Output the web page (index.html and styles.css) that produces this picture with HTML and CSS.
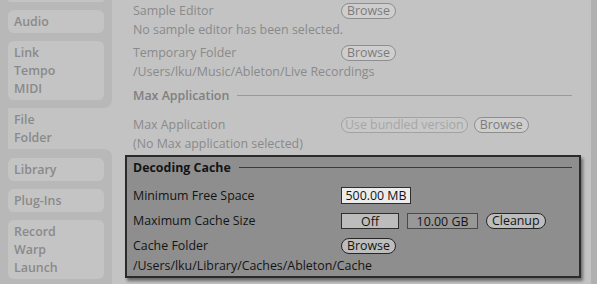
FILE: index.html
```html
<!DOCTYPE html>
<html lang="en">
<head>
    <meta charset="UTF-8">
    <meta name="viewport" content="width=device-width, initial-scale=1.0">
    <title>Preferences - File Folder</title>
    <link rel="stylesheet" href="styles.css">
</head>
<body>
    <div class="app">
        <nav class="sidebar">
            <div class="seg seg-top">
                <div class="tab stub"></div>
                <div class="tab">Audio</div>
                <div class="tab">Link<br>Tempo<br>MIDI</div>
            </div>
            <div class="tab-active">File<br>Folder</div>
            <div class="seg seg-bottom">
                <div class="tab">Library</div>
                <div class="tab">Plug-Ins</div>
                <div class="tab">Record<br>Warp<br>Launch</div>
            </div>
        </nav>

        <main class="content">
            <div class="row first">
                <span class="label">Sample Editor</span>
                <button class="pill">Browse</button>
            </div>
            <div class="row">No sample editor has been selected.</div>

            <div class="row gap-s">
                <span class="label">Temporary Folder</span>
                <button class="pill">Browse</button>
            </div>
            <div class="row">/Users/lku/Music/Ableton/Live Recordings</div>

            <div class="row heading gap-m">Max Application</div>
            <div class="row gap-l">
                <span class="label">Max Application</span>
                <button class="pill pill-off">Use bundled version</button>
                <button class="pill">Browse</button>
            </div>
            <div class="row">(No Max application selected)</div>

            <section class="spotlight">
                <div class="row heading">Decoding Cache</div>
                <div class="row gap-xl">
                    <span class="label">Minimum Free Space</span>
                    <span class="field field-light">500.00 MB</span>
                </div>
                <div class="row gap-s">
                    <span class="label">Maximum Cache Size</span>
                    <span class="field field-off">Off</span>
                    <span class="field field-dark">10.00 GB</span>
                    <button class="pill">Cleanup</button>
                </div>
                <div class="row gap-s">
                    <span class="label">Cache Folder</span>
                    <button class="pill">Browse</button>
                </div>
                <div class="row path">/Users/lku/Library/Caches/Ableton/Cache</div>
            </section>
        </main>

        <div class="scrollbar"></div>
    </div>
</body>
</html>
```

FILE: styles.css
```css
html, body {
    margin: 0;
    padding: 0;
}
body {
    font-family: "Open Sans", "DejaVu Sans", sans-serif;
    font-size: 12.4px;
    font-weight: 500;
    background: #c3c3c3;
    color: #8a8a8a;
    overflow: hidden;
}
.app {
    display: flex;
    width: 597px;
    height: 284px;
    overflow: hidden;
}

/* sidebar */
.sidebar {
    width: 112px;
    flex-shrink: 0;
    display: flex;
    flex-direction: column;
}
.seg {
    background: #b8b8b8;
    padding: 0 8px 8px 8px;
    display: flex;
    flex-direction: column;
    gap: 8px;
}
.seg-top {
    border-bottom-right-radius: 8px;
}
.seg-bottom {
    padding-top: 9px;
    flex: 1;
    border-top-right-radius: 8px;
}
.tab {
    background: #c4c4c4;
    border-radius: 6px;
    padding: 3px 6px 2px;
    line-height: 18px;
    font-weight: 600;
}
.tab.stub {
    height: 2px;
    padding: 0;
    border-radius: 0 0 6px 6px;
}
.tab-active {
    border-left: 8px solid #b8b8b8;
    padding: 3px 6px 2px;
    line-height: 18px;
    height: 36px;
    font-weight: 600;
}

/* main panel */
.content {
    flex: 1;
    min-width: 0;
    padding: 1px 19px 0 21px;
}
.row {
    display: flex;
    align-items: center;
    height: 19px;
    white-space: nowrap;
}
.gap-s { margin-top: 6px; }
.row.first + .row + .gap-s { margin-top: 4px; }
.gap-m { margin-top: 5px; }
.gap-l { margin-top: 10px; }
.gap-xl { margin-top: 9px; }
.label {
    width: 208px;
    flex-shrink: 0;
}
.heading {
    font-weight: 600;
    color: #808080;
}
.heading::after {
    content: "";
    flex: 1;
    height: 1px;
    margin-left: 8px;
    background: #9a9a9a;
}

.pill {
    font: inherit;
    color: #7c7c7c;
    background: #cecece;
    border: 1px solid #8e8e8e;
    border-radius: 8px;
    height: 16px;
    line-height: 13px;
    padding: 0 5px;
    margin: 0 6px 0 0;
}
.pill-off {
    color: #a6a6a6;
    background: #c8c8c8;
    border-color: #a2a2a2;
    padding: 0 3px;
}

/* highlighted section */
.spotlight {
    margin: 2px 0 0 -8px;
    width: 440px;
    padding: 1px 6px 1px 6px;
    background: #8e8e8e;
    border: 2px solid #2b2b2b;
    box-shadow: 2px 3px 3px rgba(0, 0, 0, 0.45);
    color: #141414;
}
.spotlight .heading {
    color: #141414;
    font-weight: 700;
}
.spotlight .heading::after {
    background: #3a3a3a;
    margin-right: 1px;
}
.spotlight .pill {
    color: #141414;
    background: #bdbdbd;
    border-color: #262626;
}
.spotlight .path {
    margin-top: 1px;
}
.field {
    box-sizing: border-box;
    height: 17px;
    line-height: 15px;
    border: 1px solid #2e2e2e;
    text-align: center;
    margin-right: 8px;
}
.field-light {
    width: 70px;
    background: #ececec;
}
.field-off {
    width: 58px;
    height: 16px;
    background: #bcbcbc;
}
.field-dark {
    width: 71px;
    height: 16px;
    background: #989898;
    border-color: #4a4a4a;
}

.scrollbar {
    width: 6px;
    flex-shrink: 0;
    background: #b0b0b0;
}
```
